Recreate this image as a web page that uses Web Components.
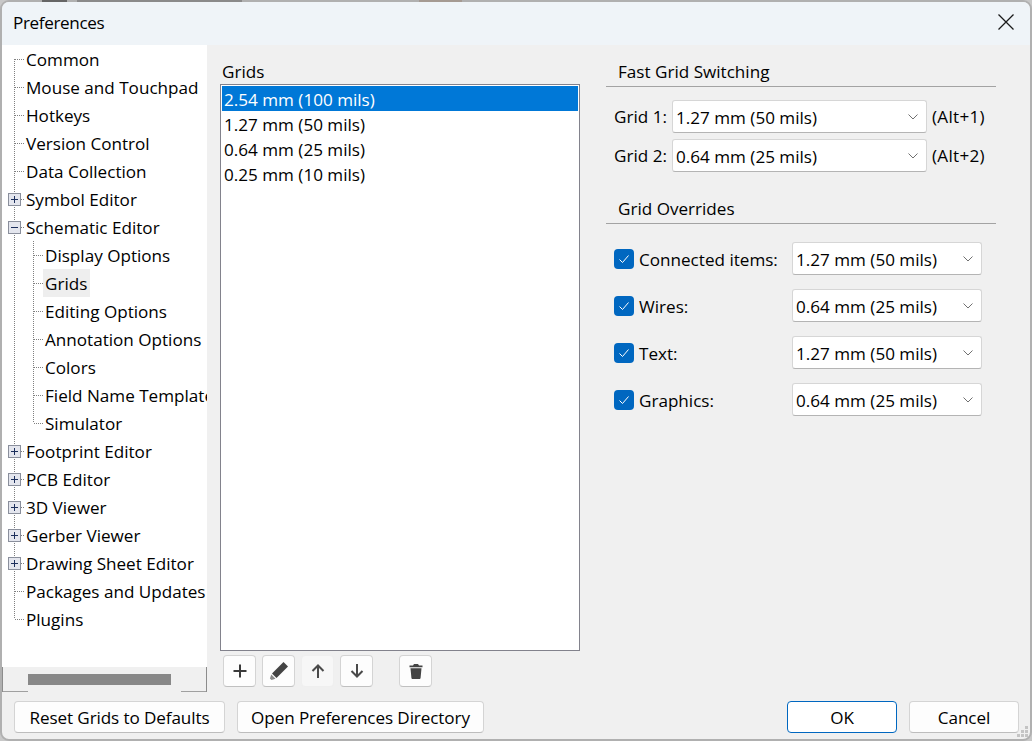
<!DOCTYPE html>
<html>
<head>
<meta charset="utf-8">
<title>Preferences</title>
<style>
  html, body { margin: 0; padding: 0; height: 100%; background: #c8c8c8; }
  body { font: 17.1px "Open Sans", "Noto Sans", sans-serif; color: #000; overflow: hidden; }
</style>
</head>
<body>

<template id="pref-dialog-template">
  <style>
    :host {
      display: flex;
      flex-direction: column;
      box-sizing: border-box;
      position: relative;
      width: 1032px;
      height: 741px;
      background: #f0f0f0;
      border: 2px solid #b0b0b0;
      border-radius: 9px;
    }
    /* bit of the window behind that peeks out above the dialog */
    .behind {
      position: absolute;
      left: 40px;
      top: -2px;
      width: 460px;
      height: 2px;
      background: linear-gradient(90deg, #666 0 25px, #b0b0b0 25px 35px, #8a8a8a 35px 200px, #b0b0b0 200px 377px, #a59a92 377px 420px, #b0b0b0 420px);
    }
    .title {
      flex: none;
      height: 43px;
      box-sizing: border-box;
      display: flex;
      align-items: center;
      justify-content: space-between;
      padding: 0 16px 3px 11px;
      background: #eff4f8;
      border-radius: 7px 7px 0 0;
    }
    .title span { letter-spacing: -.35px; }
    .main { flex: 1; display: flex; min-height: 0; }
    .footer {
      flex: none;
      display: flex;
      gap: 12px;
      padding: 9px 11px 6px 12px;
    }
    .spacer { flex: 1; }
    .grip {
      position: absolute;
      right: 1px;
      bottom: 1px;
    }
  </style>
  <div class="behind"></div>
  <div class="title">
    <span>Preferences</span>
    <svg width="16" height="16" viewBox="0 0 16 16"><path d="M.5.5l15 15M15.500.5l-15 15" stroke="#1a1a1a" stroke-width="1.300" fill="none"/></svg>
  </div>
  <div class="main"><slot></slot></div>
  <div class="footer">
    <slot name="footer-left"></slot>
    <span class="spacer"></span>
    <slot name="footer-right"></slot>
  </div>
  <svg class="grip" width="12" height="12" viewBox="0 0 12 12" fill="#c4c4c4">
    <rect x="8" y="0" width="3" height="3"/><rect x="4" y="4" width="3" height="3"/><rect x="8" y="4" width="3" height="3"/>
    <rect x="0" y="8" width="3" height="3"/><rect x="4" y="8" width="3" height="3"/><rect x="8" y="8" width="3" height="3"/>
  </svg>
</template>

<template id="pref-tree-template">
  <style>
    :host {
      display: flex;
      flex-direction: column;
      flex: none;
      width: 205px;
      background: #fff;
    }
    .rows { flex: 1; overflow: hidden; }
    .hbar {
      flex: none;
      box-sizing: border-box;
      height: 25px;
      border-left: 1px solid #8c8c8c;
      border-right: 1px solid #8c8c8c;
      padding: 7px 35px 7px 25px;
      /* bottom edge stops where the thumb runs */
      background:
        linear-gradient(#a0a0a0, #a0a0a0) left bottom / 25px 1px no-repeat,
        linear-gradient(#a0a0a0, #a0a0a0) right bottom / 25px 1px no-repeat,
        #f0f0f0;
    }
    .thumb { height: 11px; background: #888; }
  </style>
  <div class="rows"><slot></slot></div>
  <div class="hbar"><div class="thumb"></div></div>
</template>

<template id="tree-row-template">
  <style>
    :host {
      display: flex;
      height: 28px;
      white-space: nowrap;
      overflow: hidden;
    }
    svg { flex: none; display: block; }
    .label { display: flex; align-items: center; }
    :host([current]) .label { background: #eeeeee; padding: 0 3px 0 2px; margin-left: -2px; }
  </style>
  <span class="guides"></span>
  <span class="label"><span><slot></slot></span></span>
</template>

<template id="grid-list-template">
  <style>
    :host {
      display: flex;
      flex-direction: column;
      box-sizing: border-box;
      height: 567px;
      background: #fff;
      border: 1px solid #82828c;
      padding: 1px;
    }
  </style>
  <slot></slot>
</template>

<template id="list-item-template">
  <style>
    :host {
      display: block;
      height: 25px;
      line-height: 27px;
      padding-left: 2px;
      white-space: nowrap;
      overflow: hidden;
    }
    :host([selected]) { background: #0078d7; color: #fff; }
  </style>
  <slot></slot>
</template>

<template id="tool-button-template">
  <style>
    :host {
      display: flex;
      align-items: center;
      justify-content: center;
      box-sizing: border-box;
      width: 33px;
      height: 32px;
      background: #fdfdfd;
      border: 1px solid #d4d4d4;
      border-bottom-color: #c0c0c0;
      border-radius: 4px;
    }
    :host([disabled]) { background: #f7f7f7; border-color: #efefef; }
    svg { display: block; }
  </style>
  <slot></slot>
</template>

<template id="push-button-template">
  <style>
    :host {
      display: flex;
      align-items: center;
      justify-content: center;
      box-sizing: border-box;
      height: 32px;
      background: #fdfdfd;
      border: 1px solid #d4d4d4;
      border-bottom-color: #bdbdbd;
      border-radius: 4px;
      white-space: nowrap;
      letter-spacing: -.1px;
    }
    :host([primary]) { background: #fff; border: 1px solid #0067c0; }
  </style>
  <slot></slot>
</template>

<template id="combo-box-template">
  <style>
    :host {
      display: flex;
      align-items: center;
      justify-content: space-between;
      box-sizing: border-box;
      height: 33px;
      padding: 2px 7px 0 3px;
      background: #fff;
      border: 1px solid #d6d6d6;
      border-bottom-color: #b4b4b4;
      border-radius: 3px;
      white-space: nowrap;
    }
    svg { flex: none; display: block; margin-top: -2px; }
  </style>
  <slot></slot>
  <svg width="12" height="7" viewBox="0 0 12 7"><path d="M1.500 1.500L6 6l4.500-4.500" fill="none" stroke="#707070" stroke-width="1"/></svg>
</template>

<template id="check-box-template">
  <style>
    :host {
      display: flex;
      align-items: center;
      justify-content: center;
      flex: none;
      width: 20px;
      height: 20px;
      background: #0067c0;
      border-radius: 4px;
    }
    svg { display: block; }
  </style>
  <svg width="12" height="10" viewBox="0 0 12 10"><path d="M1.500 5.500l3 3 6-7" fill="none" stroke="#fff" stroke-width="1"/></svg>
</template>

<template id="section-head-template">
  <style>
    :host {
      display: block;
      height: 26px;
      line-height: 24px;
      padding-left: 12px;
      border-bottom: 1px solid #a3a3a3;
    }
  </style>
  <slot></slot>
</template>

<template id="grids-panel-template">
  <style>
    :host { display: flex; flex: 1; min-width: 0; padding: 15px 0 0 13px; }
    .left { flex: none; width: 360px; }
    .cap { height: 24px; line-height: 24px; padding-left: 2px; }
    .tools { display: flex; gap: 6px; padding: 4px 0 0 3px; }
    .tools .gap { width: 14px; }
    .right { flex: none; width: 390px; margin-left: 26px; }
    .fast {
      display: grid;
      grid-template-columns: 58px 255px auto;
      row-gap: 6px;
      align-items: center;
      padding: 13px 0 25px 8px;
    }
    .fast .hint { padding-left: 5px; letter-spacing: .3px; }
    .over {
      display: grid;
      grid-template-columns: 25px 153px 190px;
      row-gap: 14px;
      align-items: center;
      padding: 18px 0 0 8px;
    }
    .over span { padding-top: 2px; }
  </style>
  <div class="left">
    <div class="cap">Grids</div>
    <grid-list>
      <list-item selected>2.54 mm (100 mils)</list-item>
      <list-item>1.27 mm (50 mils)</list-item>
      <list-item>0.64 mm (25 mils)</list-item>
      <list-item>0.25 mm (10 mils)</list-item>
    </grid-list>
    <div class="tools">
      <tool-button><svg width="14" height="14" viewBox="0 0 14 14"><path d="M7 .5v13M.5 7h13" stroke="#3a3a3a" stroke-width="2" fill="none"/></svg></tool-button>
      <tool-button><svg width="20" height="20" viewBox="0 0 20 20"><path d="M14.500 1l4.500 4.500L7.500 17 3 12.500z" fill="#444"/><path d="M2.300 13.500l4.200 4.200-4 1.400-1.600-1.600z" fill="#8a8a8a"/></svg></tool-button>
      <tool-button disabled><svg width="14" height="14" viewBox="0 0 14 14"><path d="M7 14V1.500M1.500 7L7 1.500 12.500 7" stroke="#4a4a4a" stroke-width="2" fill="none"/></svg></tool-button>
      <tool-button><svg width="14" height="14" viewBox="0 0 14 14"><path d="M7 0v12.500M1.500 7L7 12.500 12.500 7" stroke="#4a4a4a" stroke-width="2" fill="none"/></svg></tool-button>
      <span class="gap"></span>
      <tool-button><svg width="14" height="15" viewBox="0 0 14 15"><path d="M5 0h4l1 1.500h3.500v1.800H.5V1.500H4zM1.500 4.300h11l-.9 9.400c-.1.800-.5 1.300-1.300 1.300H3.700c-.8 0-1.200-.5-1.300-1.300z" fill="#444"/></svg></tool-button>
    </div>
  </div>
  <div class="right">
    <section-head>Fast Grid Switching</section-head>
    <div class="fast">
      <span>Grid 1:</span><combo-box>1.27 mm (50 mils)</combo-box><span class="hint">(Alt+1)</span>
      <span>Grid 2:</span><combo-box>0.64 mm (25 mils)</combo-box><span class="hint">(Alt+2)</span>
    </div>
    <section-head>Grid Overrides</section-head>
    <div class="over">
      <check-box></check-box><span>Connected items:</span><combo-box>1.27 mm (50 mils)</combo-box>
      <check-box></check-box><span>Wires:</span><combo-box>0.64 mm (25 mils)</combo-box>
      <check-box></check-box><span>Text:</span><combo-box>1.27 mm (50 mils)</combo-box>
      <check-box></check-box><span>Graphics:</span><combo-box>0.64 mm (25 mils)</combo-box>
    </div>
  </div>
</template>

<pref-dialog>
  <pref-tree>
    <tree-row first>Common</tree-row>
    <tree-row>Mouse and Touchpad</tree-row>
    <tree-row>Hotkeys</tree-row>
    <tree-row>Version Control</tree-row>
    <tree-row>Data Collection</tree-row>
    <tree-row box="plus">Symbol Editor</tree-row>
    <tree-row box="minus">Schematic Editor</tree-row>
    <tree-row child>Display Options</tree-row>
    <tree-row child current>Grids</tree-row>
    <tree-row child>Editing Options</tree-row>
    <tree-row child>Annotation Options</tree-row>
    <tree-row child>Colors</tree-row>
    <tree-row child>Field Name Templates</tree-row>
    <tree-row child last-child>Simulator</tree-row>
    <tree-row box="plus">Footprint Editor</tree-row>
    <tree-row box="plus">PCB Editor</tree-row>
    <tree-row box="plus">3D Viewer</tree-row>
    <tree-row box="plus">Gerber Viewer</tree-row>
    <tree-row box="plus">Drawing Sheet Editor</tree-row>
    <tree-row>Packages and Updates</tree-row>
    <tree-row last>Plugins</tree-row>
  </pref-tree>
  <grids-panel></grids-panel>
  <push-button slot="footer-left" style="width:211px">Reset Grids to Defaults</push-button>
  <push-button slot="footer-left" style="width:247px">Open Preferences Directory</push-button>
  <push-button slot="footer-right" primary style="width:110px">OK</push-button>
  <push-button slot="footer-right" style="width:110px">Cancel</push-button>
</pref-dialog>

<script>
// simple components, the markup just comes from the matching template
function plainElement(tag) {
  customElements.define(tag, class extends HTMLElement {
    constructor() {
      super();
      const template = document.getElementById(tag + '-template');
      this.attachShadow({ mode: 'open' }).appendChild(template.content.cloneNode(true));
    }
  });
}

['pref-dialog', 'pref-tree', 'grid-list', 'list-item', 'tool-button', 'push-button',
 'combo-box', 'check-box', 'section-head', 'grids-panel'].forEach(plainElement);

class TreeRow extends HTMLElement {
  constructor() {
    super();
    const template = document.getElementById('tree-row-template');
    this.attachShadow({ mode: 'open' }).appendChild(template.content.cloneNode(true));
  }

  connectedCallback() {
    this.shadowRoot.querySelector('.guides').innerHTML = this.guides();
  }

  // dotted tree connectors and the +/- expander box
  guides() {
    const child = this.hasAttribute('child');
    const w = child ? 43 : 24;
    const dot = 'stroke="#808080" stroke-dasharray="1 1" fill="none"';
    let s = '';

    const topStart = this.hasAttribute('first') ? 14 : 0;
    const topEnd = this.hasAttribute('last') ? 14 : 28;
    s += `<path d="M12.500 ${topStart}V${topEnd}" ${dot}/>`;

    if (child) {
      const end = this.hasAttribute('last-child') ? 14 : 28;
      s += `<path d="M31.500 0V${end}M32 14.500H42" ${dot}/>`;
    } else {
      s += `<path d="M13 14.500H23" ${dot}/>`;
    }

    const box = this.getAttribute('box');
    if (box) {
      s += '<rect x="6.500" y="8.500" width="12" height="12" fill="#e4e6ee" stroke="#8a8f9c"/>';
      s += '<path d="M9 14.500h7" stroke="#1c2f5c"/>';
      if (box === 'plus') s += '<path d="M12.500 11v7" stroke="#1c2f5c"/>';
    }
    return `<svg width="${w}" height="28" viewBox="0 0 ${w} 28">${s}</svg>`;
  }
}
customElements.define('tree-row', TreeRow);
</script>
</body>
</html>
